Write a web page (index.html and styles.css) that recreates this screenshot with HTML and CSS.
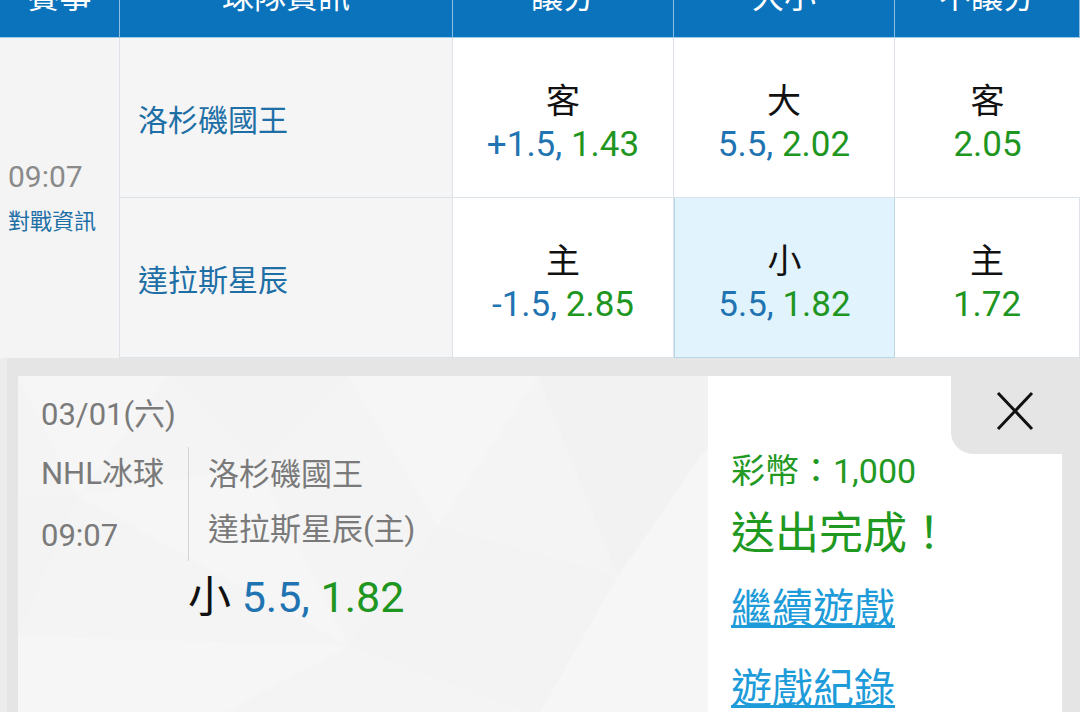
FILE: index.html
```html
<!DOCTYPE html>
<html lang="zh-Hant">
<head>
  <meta charset="UTF-8" />
  <meta name="viewport" content="width=device-width, initial-scale=1.0"/>
  <title>NHL冰球 投注</title>
  <link rel="stylesheet" href="styles.css">
</head>
<body>

<div class="board">
  <div class="odds-grid">
    <div class="th">賽事</div>
    <div class="th">球隊資訊</div>
    <div class="th">讓分</div>
    <div class="th">大小</div>
    <div class="th">不讓分</div>

    <div class="game">
      <span class="game-time">09:07</span>
      <a class="game-info">對戰資訊</a>
    </div>

    <div class="team">洛杉磯國王</div>
    <div class="odd">
      <span class="pick">客</span>
      <span><b class="line">+1.5,</b> <b class="rate">1.43</b></span>
    </div>
    <div class="odd">
      <span class="pick">大</span>
      <span><b class="line">5.5,</b> <b class="rate">2.02</b></span>
    </div>
    <div class="odd">
      <span class="pick">客</span>
      <span><b class="rate">2.05</b></span>
    </div>

    <div class="team">達拉斯星辰</div>
    <div class="odd">
      <span class="pick">主</span>
      <span><b class="line">-1.5,</b> <b class="rate">2.85</b></span>
    </div>
    <div class="odd selected">
      <span class="pick">小</span>
      <span><b class="line">5.5,</b> <b class="rate">1.82</b></span>
    </div>
    <div class="odd">
      <span class="pick">主</span>
      <span><b class="rate">1.72</b></span>
    </div>
  </div>

  <div class="overlay">
    <div class="ticket">
      <div class="ticket-info">
        <svg class="pattern" width="690" height="340" viewBox="0 0 690 340">
          <polygon points="0,0 150,0 60,120" fill="#f6f6f6"/>
          <polygon points="150,0 330,0 240,90" fill="#f3f3f3"/>
          <polygon points="330,0 520,0 420,150" fill="#f6f6f6"/>
          <polygon points="520,0 690,0 690,70 600,200" fill="#f2f2f2"/>
          <polygon points="0,120 60,120 0,260" fill="#f3f3f3"/>
          <polygon points="60,120 240,90 330,270" fill="#f6f6f6"/>
          <polygon points="420,150 600,200 520,340 330,270" fill="#f3f3f3"/>
          <polygon points="600,200 690,70 690,340 520,340" fill="#f6f6f6"/>
          <polygon points="0,260 330,270 200,340 0,340" fill="#f6f6f6"/>
        </svg>
        <div class="ticket-date">03/01(六)</div>
        <div class="match">
          <div class="match-meta">
            <span>NHL冰球</span>
            <span>09:07</span>
          </div>
          <div class="match-teams">
            <span>洛杉磯國王</span>
            <span>達拉斯星辰(主)</span>
          </div>
        </div>
        <div class="ticket-pick">小 <b class="line">5.5,</b> <b class="rate">1.82</b></div>
      </div>

      <div class="ticket-result">
        <div class="close" role="button" aria-label="關閉">
          <svg width="40" height="40" viewBox="0 0 40 40">
            <path d="M3 2 L37 38 M37 2 L3 38" stroke="#111" stroke-width="3" fill="none"/>
          </svg>
        </div>
        <div class="coins">彩幣：1,000</div>
        <div class="done">送出完成！</div>
        <a class="link" href="#">繼續遊戲</a>
        <a class="link" href="#">遊戲紀錄</a>
      </div>
    </div>
  </div>
</div>

</body>
</html>
```

FILE: styles.css
```css
body {
  margin: 0;
  font-family: Roboto, "Noto Sans CJK TC", sans-serif;
  background-color: #e5e5e5;
  overflow: hidden;
}

b {
  font-weight: normal;
}

.board {
  margin-top: -43px;
}

.odds-grid {
  display: grid;
  grid-template-columns: 120px 333px 221px 221px 1fr;
  grid-template-rows: 81px 160px 160px;
  background-color: #ffffff;
}

.th {
  background-color: #0b73bb;
  color: #ffffff;
  font-size: 32px;
  line-height: 80px;
  text-align: center;
  border-right: 1px solid #8dbfe3;
  border-bottom: 1px solid #9ccdec;
}

.th:last-child {
  border-right: none;
}

.game {
  grid-row: span 2;
  display: flex;
  flex-direction: column;
  justify-content: center;
  gap: 12px;
  padding-left: 8px;
  background-color: #f4f4f4;
  border-right: 1px solid #dde3e8;
}

.game-time {
  font-size: 30px;
  line-height: 36px;
  color: #8a8a8a;
}

.game-info {
  font-size: 22px;
  line-height: 30px;
  color: #1d6fa6;
}

.team {
  display: flex;
  align-items: center;
  padding-left: 18px;
  font-size: 30px;
  color: #1d6fa6;
  background-color: #f5f5f5;
  border-right: 1px solid #dde3e8;
  border-bottom: 1px solid #dbe3ea;
}

.odd {
  display: flex;
  flex-direction: column;
  align-items: center;
  justify-content: center;
  padding-top: 10px;
  font-size: 35px;
  line-height: 44px;
  border-right: 1px solid #dde3e8;
  border-bottom: 1px solid #dbe3ea;
}

.odd:nth-child(5n) {
  border-right: none;
}

.pick {
  color: #111111;
  font-size: 34px;
}

.line {
  color: #1f74b1;
}

.rate {
  color: #1f961f;
}

.odd.selected {
  background-color: #e1f3fc;
  border: 1px solid #b9d5e6;
  border-top: none;
}

.overlay {
  padding: 18px 18px 0;
  background: linear-gradient(to right, #ececec 7px, #e5e5e5 7px);
}

.ticket {
  display: flex;
  height: 340px;
}

.ticket-info {
  position: relative;
  overflow: hidden;
  width: 690px;
  padding-left: 23px;
  box-sizing: border-box;
  background-color: #f4f4f4;
  color: #7a7a7a;
  font-size: 31px;
}

.pattern {
  position: absolute;
  top: 0;
  left: 0;
}

.ticket-date,
.match,
.ticket-pick {
  position: relative;
}

.ticket-date {
  padding-top: 17px;
  line-height: 44px;
}

.match {
  display: flex;
  margin-top: 10px;
}

.match-meta {
  display: flex;
  flex-direction: column;
  gap: 12px;
  width: 147px;
  padding-top: 2px;
  line-height: 50px;
}

.match-teams {
  display: flex;
  flex-direction: column;
  padding-left: 19px;
  line-height: 55px;
  border-left: 1px solid #d4d4d4;
}

.ticket-pick {
  margin: 11px 0 0 147px;
  font-size: 43px;
  line-height: 50px;
  color: #111111;
}

.ticket-result {
  position: relative;
  flex: 1;
  padding: 73px 0 0 23px;
  background-color: #ffffff;
}

.close {
  position: absolute;
  top: 0;
  right: 0;
  width: 111px;
  height: 78px;
  padding: 15px 0 0 44px;
  box-sizing: border-box;
  border-bottom-left-radius: 22px;
  background-color: #e5e5e5;
  cursor: pointer;
}

.close svg {
  display: block;
}

.coins {
  font-size: 34px;
  line-height: 44px;
  color: #229922;
}

.done {
  margin-top: 11px;
  font-size: 44px;
  line-height: 60px;
  color: #1f991f;
}

.link {
  display: block;
  margin-top: 15px;
  font-size: 41px;
  line-height: 60px;
  color: #1e9bd9;
  text-decoration-thickness: 3px;
}

.link + .link {
  margin-top: 20px;
}
```
